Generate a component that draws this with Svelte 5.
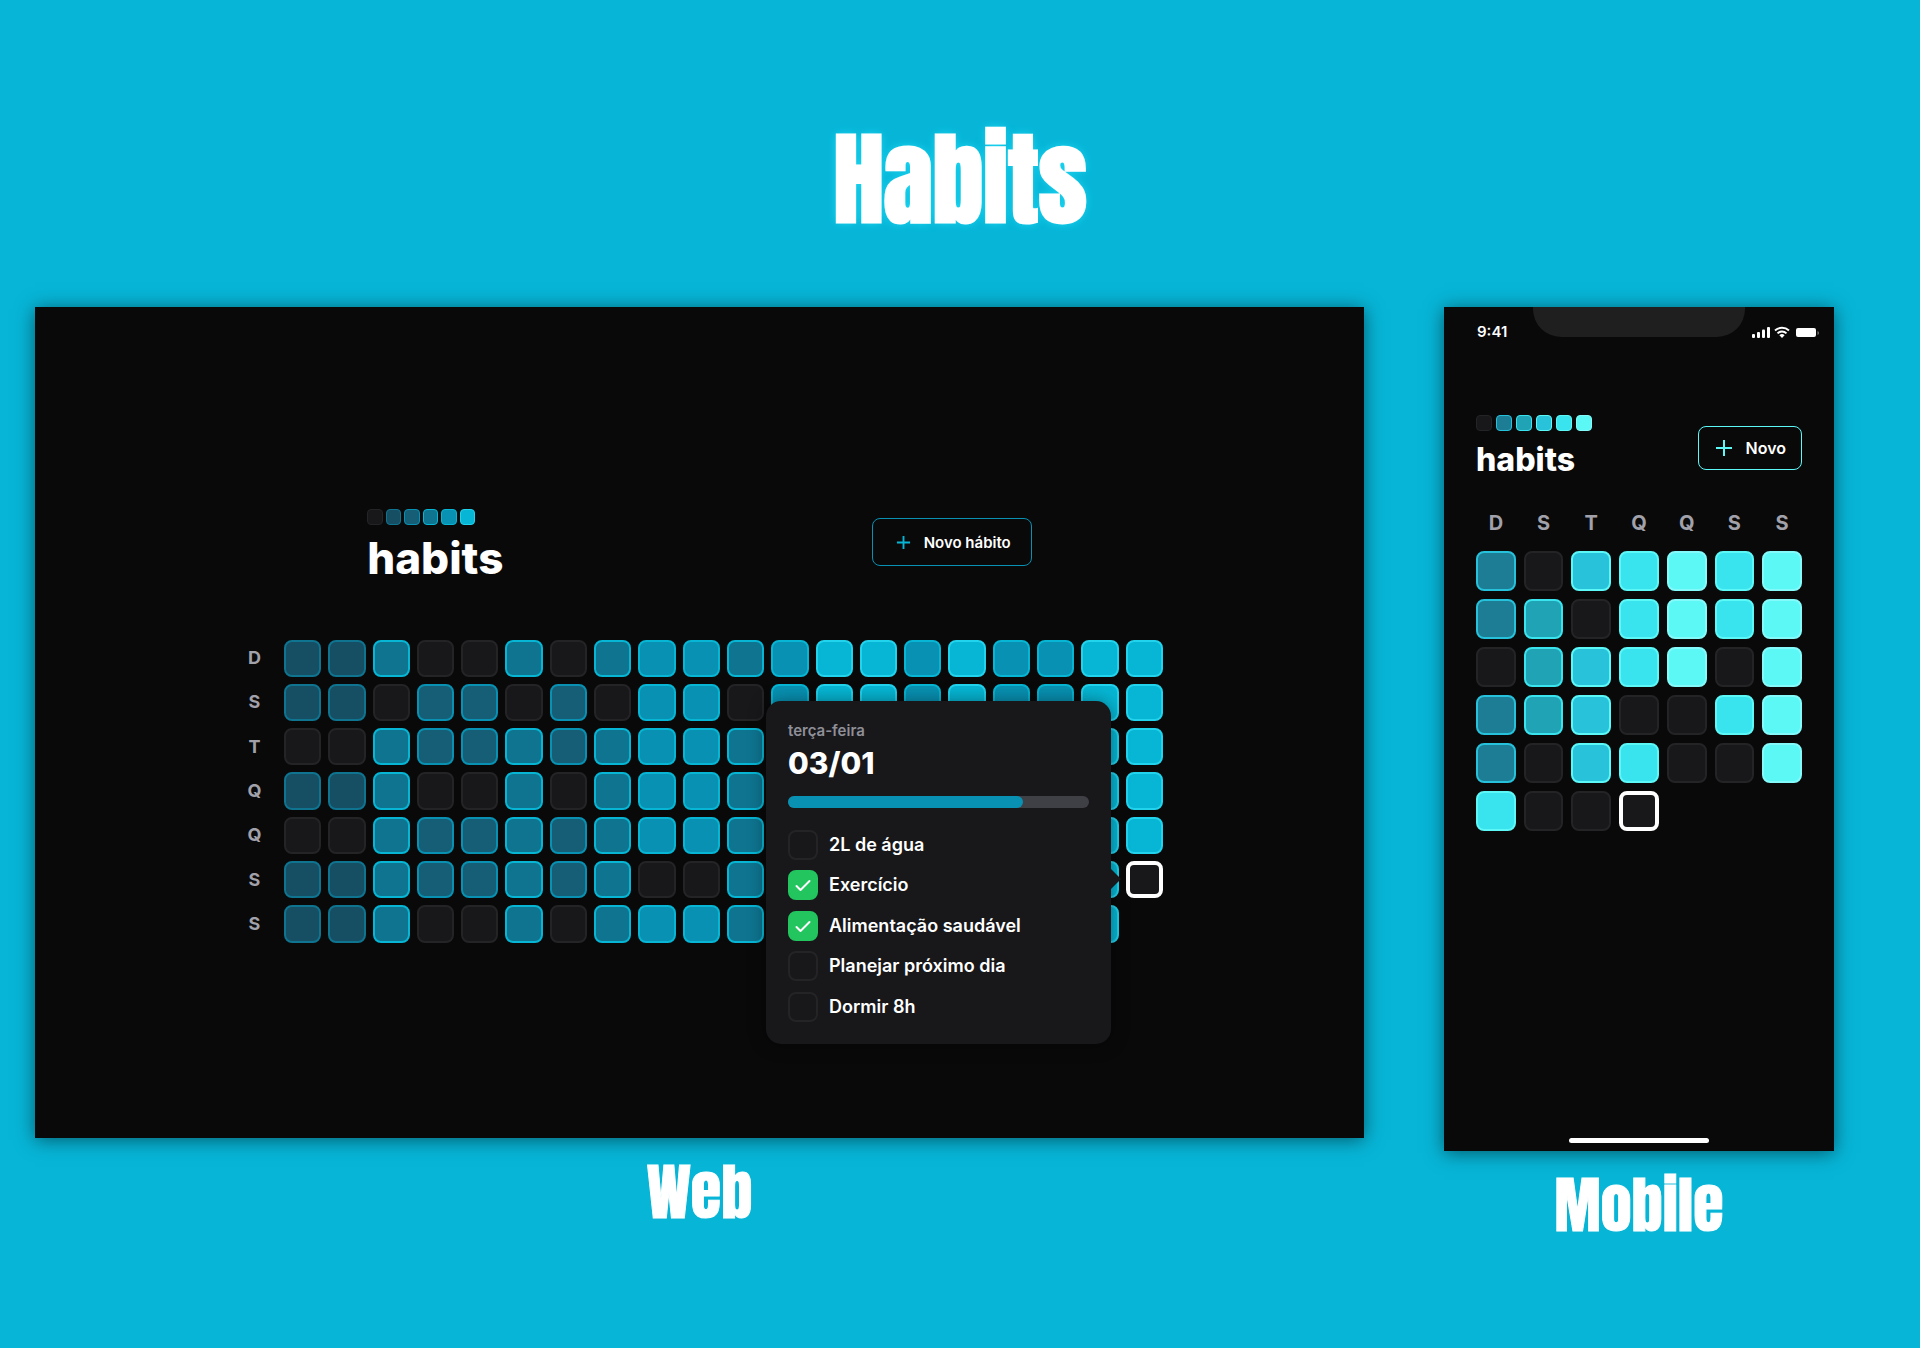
<script>
  const weekdays = ['D', 'S', 'T', 'Q', 'Q', 'S', 'S'];
  const levels = [0, 1, 2, 3, 4, 5];

  // One string per weekday: a digit is the completion level, "t" is today.
  const year = [
    '11300303443455454455',
    '11022020440455454455',
    '00322323443455454455',
    '11300303443455454455',
    '00322323443455454455',
    '1132232300345545445t',
    '1130030344345545445'
  ];

  const month = ['1034545', '1204545', '0234505', '1230045', '1034005', '400t'];

  let habits = $state([
    { name: '2L de água', done: false },
    { name: 'Exercício', done: true },
    { name: 'Alimentação saudável', done: true },
    { name: 'Planejar próximo dia', done: false },
    { name: 'Dormir 8h', done: false }
  ]);
  const progress = 78;
</script>

<main>
  <h1>Habits</h1>
  <div class="showcase">
    <figure class="web-side">
      <div class="screen web">
        <header>
          <div class="brand">
            <div class="logo">
              {#each levels as l}<i class="cell l{l}"></i>{/each}
            </div>
            <h2>habits</h2>
          </div>
          <button class="new" type="button">
            <svg viewBox="0 0 16 16" aria-hidden="true"><path d="M8 1v14M1 8h14" /></svg>
            Novo hábito
          </button>
        </header>
        <div class="year">
          {#each year as row, r}
            <div class="week">
              <span class="day">{weekdays[r]}</span>
              {#each row as l}<i class="cell l{l}"></i>{/each}
            </div>
          {/each}
          <section class="popover">
            <p class="weekday">terça-feira</p>
            <p class="date">03/01</p>
            <div class="track" role="progressbar" aria-valuenow={progress} aria-valuemin="0" aria-valuemax="100">
              <div class="fill" style="width: {progress}%"></div>
            </div>
            <div class="list">
              {#each habits as habit}
                <label>
                  <span class="box">
                    <input type="checkbox" bind:checked={habit.done} />
                    <svg viewBox="0 0 16 16" aria-hidden="true"><path d="M1.500 9l4 4L14.500 4" /></svg>
                  </span>
                  {habit.name}
                </label>
              {/each}
            </div>
          </section>
        </div>
      </div>
      <figcaption>Web</figcaption>
    </figure>

    <figure class="mobile-side">
      <div class="screen mobile">
        <div class="status">
          <span class="time">9:41</span>
          <span class="notch"></span>
          <svg class="signals" viewBox="0 0 68 12" aria-hidden="true">
            <rect x="0" y="8" width="3" height="4" rx="1" />
            <rect x="5" y="6" width="3" height="6" rx="1" />
            <rect x="10" y="3.500" width="3" height="8.500" rx="1" />
            <rect x="15" y="1" width="3" height="11" rx="1" />
            <path class="arc" d="M23 4.500a10.500 10.500 0 0 1 14 0M25.500 7.400a6.500 6.500 0 0 1 9 0" />
            <path d="M30 12l-2.600-2.700a3.800 3.800 0 0 1 5.200 0z" />
            <rect x="44" y="2" width="20" height="9" rx="2" />
            <path d="M65.500 5v4q1.500-.6 1.500-2t-1.500-2" opacity=".45" />
          </svg>
        </div>
        <header>
          <div class="brand">
            <div class="logo">
              {#each levels as l}<i class="cell l{l}"></i>{/each}
            </div>
            <h2>habits</h2>
          </div>
          <button class="new" type="button">
            <svg viewBox="0 0 16 16" aria-hidden="true"><path d="M8 0v16M0 8h16" /></svg>
            Novo
          </button>
        </header>
        <div class="month">
          {#each weekdays as d}<span class="day">{d}</span>{/each}
          {#each month as row}
            {#each row as l}<i class="cell l{l}"></i>{/each}
          {/each}
        </div>
        <div class="home"></div>
      </div>
      <figcaption>Mobile</figcaption>
    </figure>
  </div>
</main>

<style>
  :global(body) {
    margin: 0;
    background: #07b5d7;
  }
  main {
    box-sizing: border-box;
    min-height: 100vh;
    padding: 107px 86px 96px 35px;
    color: #fff;
    font-family: Inter, 'Liberation Sans', sans-serif;
  }
  h1,
  h2,
  p,
  figure {
    margin: 0;
  }
  h1,
  figcaption {
    font-family: Impact, Anton, 'Liberation Sans Narrow', 'Liberation Sans', sans-serif;
    font-weight: 400;
    text-align: center;
  }
  h1 {
    padding-left: 51px;
    font-size: 101px;
    line-height: 144px;
    -webkit-text-stroke: 3px #fff;
    text-shadow: 0 0 10px #22e0fa;
  }
  .showcase {
    display: flex;
    align-items: flex-start;
    gap: 80px;
    padding-top: 56px;
  }
  .web-side {
    flex: 1;
  }
  .mobile-side {
    flex: 0 0 390px;
  }
  figcaption {
    padding-top: 12px;
    font-size: 62px;
    line-height: 84px;
    -webkit-text-stroke: 1px #fff;
  }
  .screen {
    box-sizing: border-box;
    background: #09090a;
    box-shadow: 0 2px 18px rgba(0, 0, 0, 0.5);
  }
  .web {
    aspect-ratio: 1440 / 900;
    padding-top: 202px;
  }
  .web header {
    align-items: flex-start;
    width: 50%;
    margin: 0 auto;
  }
  header {
    display: flex;
    align-items: center;
    justify-content: space-between;
  }
  .cell {
    box-sizing: border-box;
    display: block;
    border: 2px solid #242427;
    border-radius: 8px;
    background: #18181b;
  }
  .web .l1 { background: #164e63; border-color: #0e7490; }
  .web .l2 { background: #155e75; border-color: #0891b2; }
  .web .l3 { background: #0e7490; border-color: #06b6d4; }
  .web .l4 { background: #0891b2; border-color: #06b6d4; }
  .web .l5 { background: #06b6d4; border-color: #22d3ee; }
  .mobile .l1 { background: #1c7d94; border-color: #26c2dc; }
  .mobile .l2 { background: #21a3b6; border-color: #3ae4ee; }
  .mobile .l3 { background: #28c2da; border-color: #5cf8f8; }
  .mobile .l4 { background: #3ae4ee; border-color: #5cf8f8; }
  .mobile .l5 { background: #5cf8f6; border-color: #84fafa; }
  .screen .lt {
    border: 4px solid #fff;
  }
  .logo {
    display: grid;
    grid-template-columns: repeat(6, 1fr);
  }
  .logo .cell {
    aspect-ratio: 1;
    border-width: 1px;
    border-radius: 4px;
  }
  .web .logo {
    width: 108px;
    gap: 3px;
  }
  .mobile .logo {
    width: 116px;
    gap: 4px;
  }
  h2 {
    margin-top: 8px;
    font-weight: 800;
  }
  .web h2 {
    font-size: 44px;
    line-height: 50px;
  }
  .mobile h2 {
    font-size: 32px;
    line-height: 41px;
  }
  .new {
    display: flex;
    align-items: center;
    box-sizing: border-box;
    border: 1px solid #0891b2;
    border-radius: 8px;
    background: none;
    color: #fff;
    font-family: inherit;
    font-weight: 600;
  }
  .new svg {
    fill: none;
    stroke: #06b6d4;
    stroke-width: 2;
  }
  .web .new {
    height: 48px;
    margin-top: 9px;
    padding: 0 20px 0 23px;
    gap: 13px;
    font-size: 15px;
  }
  .web .new svg {
    width: 15px;
    height: 15px;
  }
  .mobile .new {
    height: 44px;
    padding: 0 15px 0 17px;
    gap: 14px;
    border-color: #5cf8f8;
    font-size: 16px;
  }
  .mobile .new svg {
    width: 16px;
    height: 16px;
    stroke: #5cf8f8;
  }
  .year {
    position: relative;
    display: grid;
    gap: 7px;
    width: 927px;
    margin: 57px auto 0;
  }
  .week {
    display: grid;
    grid-template-columns: 41px repeat(20, 1fr);
    gap: 7px;
    align-items: center;
  }
  .week .cell {
    aspect-ratio: 1;
  }
  .day {
    color: #a1a1aa;
    font-weight: 700;
    text-align: center;
  }
  .week .day {
    padding-right: 4px;
    font-size: 18px;
    line-height: 24px;
  }
  .popover {
    position: absolute;
    top: 61px;
    right: 52px;
    box-sizing: border-box;
    display: flex;
    flex-direction: column;
    width: 345px;
    min-height: 343px;
    padding: 22px;
    border-radius: 15px;
    background: #18181b;
    box-shadow: 0 0 18px rgba(0, 0, 0, 0.4);
  }
  .popover::after {
    content: '';
    position: absolute;
    top: 168px;
    left: 100%;
    border: 10px solid transparent;
    border-left-color: #18181b;
    border-right: 0;
  }
  .weekday {
    color: #8f8f98;
    font-size: 15px;
    font-weight: 600;
    line-height: 16px;
  }
  .date {
    margin-top: 4px;
    font-size: 30px;
    font-weight: 800;
    line-height: 40px;
  }
  .track {
    height: 12px;
    margin-top: 13px;
    border-radius: 6px;
    background: #3f3f46;
  }
  .fill {
    height: 100%;
    border-radius: 6px;
    background: #0891b2;
  }
  .list {
    flex: 1;
    display: flex;
    flex-direction: column;
    justify-content: space-between;
    margin-top: 22px;
  }
  label {
    display: flex;
    align-items: center;
    gap: 11px;
    font-size: 18px;
    font-weight: 600;
    line-height: 24px;
  }
  .box {
    display: grid;
    place-items: center;
    width: 30px;
    height: 30px;
  }
  .box input,
  .box svg {
    grid-area: 1 / 1;
  }
  input {
    appearance: none;
    box-sizing: border-box;
    width: 30px;
    height: 30px;
    margin: 0;
    border: 2px solid #242427;
    border-radius: 8px;
    background: #18181b;
  }
  input:checked {
    border-color: #22c55e;
    background: #22c55e;
  }
  .box svg {
    display: none;
    width: 16px;
    height: 16px;
    fill: none;
    stroke: #fff;
    stroke-width: 2;
    stroke-linecap: round;
    stroke-linejoin: round;
    pointer-events: none;
  }
  input:checked + svg {
    display: block;
  }
  .mobile {
    display: flex;
    flex-direction: column;
    min-height: 844px;
    padding: 0 32px 8px;
  }
  .status {
    display: grid;
    grid-template: 30px / 1fr 212px 1fr;
    margin: 0 -32px;
  }
  .time {
    padding: 15px 0 0 33px;
    font-size: 15px;
    font-weight: 600;
    line-height: 20px;
  }
  .notch {
    border-radius: 0 0 28px 28px;
    background: #1f1f1f;
  }
  .signals {
    justify-self: end;
    width: 68px;
    height: 12px;
    margin: 19px 14px 0 0;
    fill: #fff;
  }
  .arc {
    fill: none;
    stroke: #fff;
    stroke-width: 2;
  }
  .mobile header {
    margin-top: 78px;
  }
  .month {
    display: grid;
    grid-template-columns: repeat(7, 1fr);
    gap: 8px;
    grid-auto-rows: 40px;
    margin-top: 23px;
  }
  .month .day {
    font-size: 20px;
    line-height: 40px;
  }
  .home {
    width: 140px;
    height: 5px;
    margin: auto auto 0;
    border-radius: 3px;
    background: #fff;
  }
</style>
